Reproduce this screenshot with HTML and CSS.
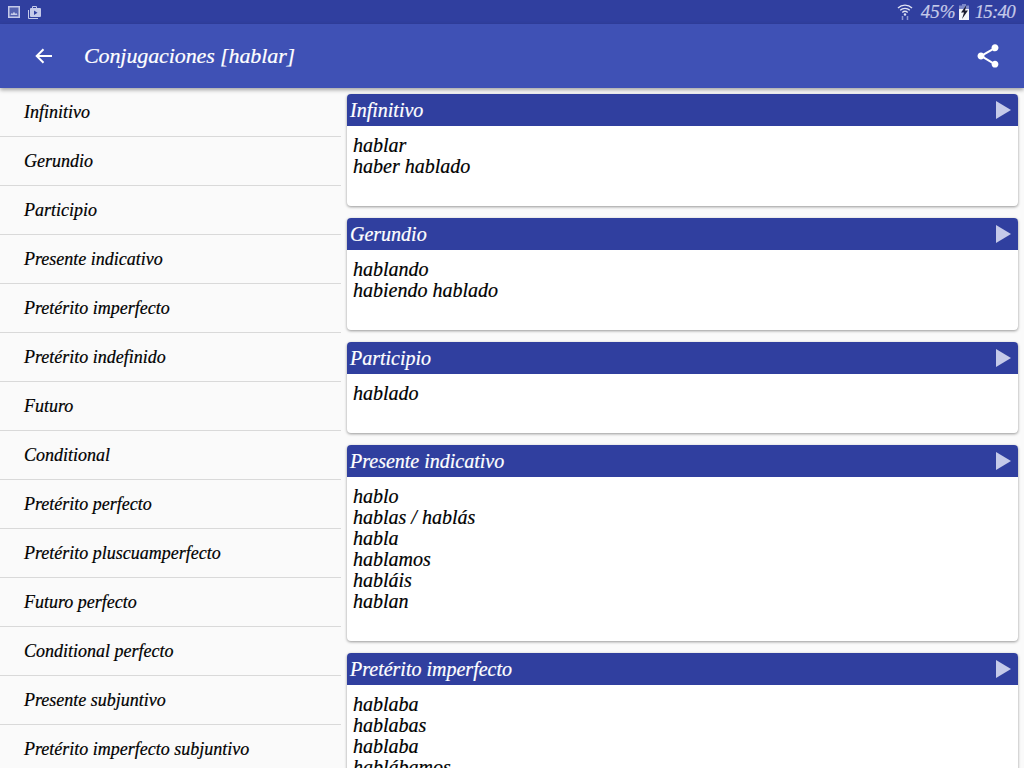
FILE: index.html
```html
<!DOCTYPE html>
<html lang="es">
<head>
<meta charset="utf-8">
<title>Conjugaciones [hablar]</title>
<link rel="stylesheet" href="styles.css">
</head>
<body>
<div class="app">
  <div class="statusbar">
    <div class="status-left">
      <svg width="12" height="12" viewBox="0 0 12 12"><path fill="#c5cae9" fill-opacity=".25" d="M1 1h10v10H1z"/><path fill-rule="evenodd" fill="#c5cae9" d="M0 0h12v12H0zM1.500 1.500v9h9v-9z"/><path fill="#c5cae9" d="M2.500 9l1-2 1 .8 1.500-2 1.300 2 1-.8 1.200 2z"/></svg>
      <svg width="13" height="13" viewBox="0 0 13 13"><path fill="#c5cae9" d="M4 2V1a1 1 0 0 1 1-1h3a1 1 0 0 1 1 1v1h3a1 1 0 0 1 1 1v7a1 1 0 0 1-1 1H3a1 1 0 0 1-1-1V3a1 1 0 0 1 1-1zm1 0h3V1H5zM0 4h1v8h9v1H1a1 1 0 0 1-1-1z"/><path fill="#303f9f" d="M6 4.500v4.500l3.500-2.250z"/></svg>
    </div>
    <div class="status-right">
      <svg class="wifi" width="16" height="18" viewBox="0 0 16 18" fill="none" stroke="#dfe2f3" stroke-width="1.400"><path d="M1 5a10 10 0 0 1 14 0M3.200 7.300a7 7 0 0 1 9.600 0M5.300 9.500a4 4 0 0 1 5.400 0"/><circle cx="8" cy="11.500" r="1.200" fill="#dfe2f3" stroke="none"/><path d="M5.500 13v4M10.500 13v4" stroke-width="1.500" stroke="#8c97d0"/></svg>
      <span class="status-text">45%</span>
      <svg class="batt" width="10" height="16" viewBox="0 0 10 16"><path fill="#7c88c8" d="M3 0h4v1.500h3V5H0V1.500h3z"/><path fill="#f5f5fa" d="M0 5h10v11H0z"/><path fill="#1a1a2e" d="M7.500 1L2 8.500h3L3 15l6-8.500H6z"/></svg>
      <span class="status-text clock">15:40</span>
    </div>
  </div>
  <header class="toolbar">
    <svg width="18" height="16" viewBox="0 0 18 16" fill="none" stroke="#fff" stroke-width="2"><path d="M17 8H2M8.500 1.200L1.700 8l6.800 6.800"/></svg>
    <h1 class="title">Conjugaciones [hablar]</h1>
    <svg width="28" height="28" viewBox="0 0 24 24"><path fill="#fff" d="M18 16.080c-.76 0-1.440.3-1.960.77L8.910 12.700c.05-.23.090-.46.090-.7s-.04-.47-.09-.7l7.050-4.110c.54.500 1.250.81 2.040.81 1.660 0 3-1.340 3-3s-1.340-3-3-3-3 1.340-3 3c0 .24.040.47.090.7L8.040 9.810C7.500 9.310 6.790 9 6 9c-1.660 0-3 1.340-3 3s1.340 3 3 3c.79 0 1.500-.31 2.040-.81l7.120 4.160c-.05.21-.08.43-.08.650 0 1.610 1.310 2.920 2.920 2.920s2.920-1.310 2.920-2.920-1.310-2.920-2.920-2.920z"/></svg>
  </header>
  <div class="content">
    <nav class="side">
      <div class="row">Infinitivo</div>
      <div class="row">Gerundio</div>
      <div class="row">Participio</div>
      <div class="row">Presente indicativo</div>
      <div class="row">Pretérito imperfecto</div>
      <div class="row">Pretérito indefinido</div>
      <div class="row">Futuro</div>
      <div class="row">Conditional</div>
      <div class="row">Pretérito perfecto</div>
      <div class="row">Pretérito pluscuamperfecto</div>
      <div class="row">Futuro perfecto</div>
      <div class="row">Conditional perfecto</div>
      <div class="row">Presente subjuntivo</div>
      <div class="row">Pretérito imperfecto subjuntivo</div>
    </nav>
    <main class="cards">
      <section class="card">
        <div class="card-head"><span>Infinitivo</span><i class="play"></i></div>
        <div class="card-body">hablar<br>haber hablado</div>
      </section>
      <section class="card">
        <div class="card-head"><span>Gerundio</span><i class="play"></i></div>
        <div class="card-body">hablando<br>habiendo hablado</div>
      </section>
      <section class="card">
        <div class="card-head"><span>Participio</span><i class="play"></i></div>
        <div class="card-body">hablado</div>
      </section>
      <section class="card">
        <div class="card-head"><span>Presente indicativo</span><i class="play"></i></div>
        <div class="card-body">hablo<br>hablas / hablás<br>habla<br>hablamos<br>habláis<br>hablan</div>
      </section>
      <section class="card">
        <div class="card-head"><span>Pretérito imperfecto</span><i class="play"></i></div>
        <div class="card-body">hablaba<br>hablabas<br>hablaba<br>hablábamos<br>hablabais<br>hablaban</div>
      </section>
    </main>
  </div>
</div>
</body>
</html>
```
FILE: styles.css
```css
* { box-sizing: border-box; }
html, body { margin: 0; height: 100%; overflow: hidden; }
body { font-family: "Liberation Serif", serif; font-style: italic; -webkit-text-stroke: .2px currentColor; background: #fafafa; color: #000; }
.app { width: 1024px; height: 768px; display: flex; flex-direction: column; overflow: hidden; }
.statusbar { height: 24px; flex: none; background: #303f9f; display: flex; justify-content: space-between; align-items: center; padding: 0 9px 0 8px; }
.status-left { display: flex; align-items: center; gap: 8px; }
.status-right { display: flex; align-items: center; }
.wifi { margin-right: 8px; }
.batt { margin: 0 6px 0 3px; }
.status-text { color: #c5cae9; font-size: 19px; line-height: 24px; }
.clock { letter-spacing: -.8px; }
.toolbar { height: 64px; flex: none; background: #3f51b5; display: flex; align-items: center; padding: 0 22px 0 35px; box-shadow: 0 2px 4px rgba(0,0,0,.35); position: relative; z-index: 2; }
.title { flex: 1; margin: 0 0 0 31px; color: #fff; font-size: 22px; font-weight: normal; letter-spacing: -.1px; }
.content { flex: 1; display: flex; min-height: 0; }
.side { width: 341px; flex: none; }
.row { height: 49px; padding: 1px 0 0 24px; display: flex; align-items: center; font-size: 18px; border-bottom: 1px solid #d9d9d9; }
.cards { flex: 1; padding: 6px 6px 0; display: flex; flex-direction: column; gap: 12px; min-width: 0; }
.card { flex: none; background: #fff; border-radius: 4px; box-shadow: 0 1px 3px rgba(0,0,0,.4); overflow: hidden; }
.card-head { height: 32px; background: #303f9f; color: #fff; display: flex; align-items: center; justify-content: space-between; padding: 0 7px 0 3px; font-size: 20px; }
.play { width: 0; height: 0; border-left: 15px solid #c5cae9; border-top: 9px solid transparent; border-bottom: 9px solid transparent; }
.card-body { padding: 9px 6px 29px; font-size: 20px; line-height: 21px; }
```
